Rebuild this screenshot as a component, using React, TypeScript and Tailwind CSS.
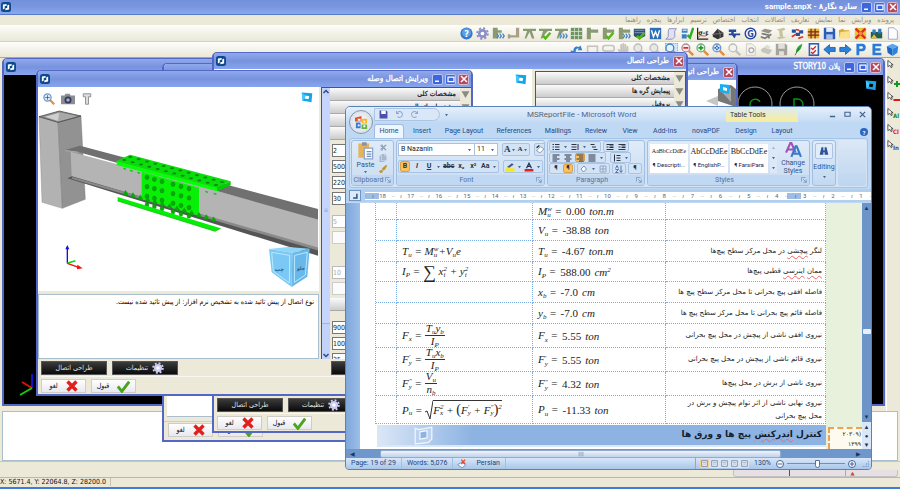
import { type ReactNode } from "react";
import { FaUndo, FaRedo, FaPaintBrush, FaCut, FaCopy, FaHandPaper } from "react-icons/fa";

interface IconProps {
  children: ReactNode;
  className?: string;
}

function Icon({ children, className = "size-[15px]" }: IconProps) {
  return (
    <svg viewBox="0 0 16 16" className={`shrink-0 ${className}`} aria-hidden="true">
      {children}
    </svg>
  );
}

function AppLogo() {
  return (
    <Icon className="size-[10px]">
      <rect width="16" height="16" rx="4" fill="#0d4a8c" />
      <path d="M3 4l6-1v3l-3 .5v4L3 12z" fill="#fff" />
      <path d="M13 12l-6 1v-3l3-.5v-4L13 4z" fill="#fff" />
    </Icon>
  );
}

function ViewLogo() {
  return (
    <Icon className="size-3">
      <path fillRule="evenodd" d="M1 2l14 1-1 12-5-1-7-1z M6 6l-1 4 5 1 1-4z" fill="#14a4ea" />
      <path d="M1 2l5 4-1 4-3 3z" fill="#46c6fa" />
    </Icon>
  );
}

const olive = "#8a9a72";
const chevrons = <path d="M6 8l2 3-2 3M9.500 8l2 3-2 3M13 8l2 3-2 3" stroke="#4383c4" fill="none" strokeWidth="1.600" />;
const check = <path d="M5 11l3 3 6-7" stroke="#52b813" fill="none" strokeWidth="3" />;

function gear(color: string) {
  return (
    <g>
      <circle cx="8" cy="8" r="5.5" fill={color} />
      <circle cx="8" cy="8" r="6.5" fill="none" stroke={color} strokeWidth="2.4" strokeDasharray="2.6 2.5" />
      <circle cx="8" cy="8" r="2.3" fill="#fff" />
    </g>
  );
}

function lens(ring: string, glass: string, mark?: ReactNode) {
  return (
    <g>
      <path d="M9 9l6 6" stroke={ring === "#bbb" ? "#c4c2bb" : "#e88b3c"} strokeWidth="3" />
      <circle cx="6" cy="6" r="4.8" fill={glass} stroke={ring} strokeWidth="1.6" />
      {mark}
    </g>
  );
}

const topIcons: { name: string; art: ReactNode }[] = [
  {
    name: "Help",
    art: (
      <g>
        <circle cx="8" cy="8" r="7.5" fill="#2f79cf" />
        <circle cx="8" cy="7" r="5.5" fill="#5d9fe4" />
        <text x="8" y="12" fontSize="11" fontWeight="700" textAnchor="middle" fill="#fff">?</text>
      </g>
    ),
  },
  { name: "Options", art: gear("#8b8fc9") },
  { name: "Column steps", art: <g><path d="M1 1h6v13H1zM7 4h5v3H7z" fill={olive} />{chevrons}</g> },
  { name: "Base joint", art: <path d="M2 10h9V1h4v12H2zM1 9h3v5H1z" fill="#a9a08a" /> },
  { name: "Brace", art: <path d="M0 2h16v3h-5l3 9h-3L8 6l-4 8H2l3-9H0z" fill={olive} /> },
  { name: "Brace check", art: <g><path d="M0 2h16v3h-5L8 8 4 14H2l3-9H0z" fill={olive} />{check}</g> },
  { name: "Brace steps", art: <g><path d="M0 2h16v3h-5L8 8 4 14H2l3-9H0z" fill={olive} />{chevrons}</g> },
  { name: "Grid", art: <g><path d="M1 1h14v14H1z" fill="#6f9562" /><path d="M1 5.5h14M1 10.500h14M5.500 1v14M10.500 1v14" stroke="#d6e3cd" /></g> },
  { name: "Joint", art: <path d="M1 1h5v2h9v4H6v8H1z" fill={olive} /> },
  { name: "Joint check", art: <g><path d="M1 1h5v2h9v4H6v8H1z" fill={olive} />{check}</g> },
  { name: "Joint steps", art: <g><path d="M1 1h5v2h9v4H6v8H1z" fill={olive} />{chevrons}</g> },
  { name: "Verify", art: <g><path d="M1 2h14v9l-7 4-7-4z" fill="#2f4f6f" /><path d="M2 4h12M2 7h12" stroke="#8fb0cc" />{check}</g> },
  { name: "Word report", art: <g><path d="M1 1h14v14H1z" fill="#2d6fb8" /><path d="M3 4l2.500 8L8 6l2.500 6L13 4" stroke="#fff" fill="none" strokeWidth="1.700" /></g> },
  { name: "Script", art: <path d="M5 2h9l-2 3v7l-3 3H1l3-3V5z" fill="#dfe0f2" stroke="#8183b8" /> },
  { name: "Model check", art: <g><path d="M1 2h7v5H1zM1 9h6v5H1z" fill="#3d7cc0" /><path d="M2 3h5v2H2z" fill="#bcd8f0" /><path d="M8 10l3 3 4-12" stroke="#2fae22" strokeWidth="3" fill="none" /></g> },
  { name: "Stress", art: <g><path d="M2 1v14h13" stroke="#222" strokeWidth="1.500" fill="none" /><text x="9" y="10" fontSize="8" fontWeight="700" textAnchor="middle" fill="#222">σ-ε</text><path d="M3 13c2-5 6 0 11-3" stroke="#c22" fill="none" /></g> },
  { name: "Load", art: <g><path d="M1 9l6-7 7 5v5l-7 3-6-3z" fill="#333" /><path d="M7 2l3 6 4-1M1 9l9-1v5" stroke="#888" fill="none" /></g> },
  { name: "Section", art: <path d="M1 3h9v3H7v2h8v2h-5l-2 4-3-4H1V8h3V6H1z" fill="#23489c" /> },
  { name: "Group", art: <g><circle cx="8" cy="8" r="6.500" fill="#fff" stroke="#23489c" strokeWidth="1.800" /><text x="8" y="12" fontSize="11" fontWeight="700" textAnchor="middle" fill="#23489c">G</text></g> },
  { name: "Plate", art: <g><path d="M1 5l5-3 9 2-4 4z" fill="#989488" /><path d="M2 8l9 2v4M1 12l5 2 8-5" stroke="#777" strokeWidth="2" fill="none" /></g> },
  { name: "Profile", art: <path d="M2 3l9-2 2 2-4 2 1 7 4 1-9 2-3-2 4-1-1-7z" fill="#c6c4a4" /> },
  { name: "Bolts", art: <g><path d="M1 3h5v4H1zM6 7h5v4H6zM10 4h5v4h-5z" fill="#2350a0" /><path d="M1 12l5-3M9 14l6-2M6 3l4 1" stroke="#d33" strokeWidth="2" /></g> },
  { name: "Frame", art: <g><path d="M1 2h14v12H1z" fill="#e6b53a" /><path d="M1 6h14M1 10h14M5 2v12M10 2v12" stroke="#7c261c" strokeWidth="1.500" /></g> },
  { name: "Save", art: <g><path d="M1 1h12l2 2v12H1z" fill="#2c5db4" /><path d="M4 1h8v5H4z" fill="#e9f0fa" /><path d="M4 9h8v6H4z" fill="#a9c1e6" /></g> },
  { name: "Open", art: <g><path d="M1 4l5-2 2 2h6v9H2z" fill="#d9a933" /><path d="M3 6l12-1-2 9H2z" fill="#fde08a" /></g> },
  { name: "Delete grid", art: <g><path d="M1 1h14v14H1z" fill="#e8c52f" /><path d="M2 2l12 12M14 2L2 14" stroke="#d5341e" strokeWidth="3" /><path d="M6 6h4v4H6z" fill="#f08438" /></g> },
  { name: "Landscape", art: <g><path d="M1 6h14v8H1z" fill="#2c5c49" /><path d="M3 3h4v5H3zM10 2h4v6h-4z" fill="#2b7fc4" /><path d="M1 14l4-5 4 5z" fill="#d9c338" /></g> },
  { name: "New", art: <path d="M3 1h7l4 4v10H3z" fill="#fdfdff" stroke="#8f9cc0" /> },
];

const gray = "#c6c4bc";

const bottomIcons: { name: string; art: ReactNode }[] = [
  { name: "Refresh", art: <path d="M1 15V9l3 1c0-5 4-7 7-5l2-2 2 6H9l2-2C8 6 7 8 7 11l3 1z" fill="#2c83d0" /> },
  { name: "Box", art: <rect x="2" y="4" width="12" height="9" fill="none" stroke={gray} strokeWidth="2" /> },
  { name: "Lasso", art: <g><rect x="1" y="3" width="14" height="7" rx="3" fill="none" stroke={gray} strokeWidth="2" /><path d="M6 10l2 4" stroke={gray} strokeWidth="2" /></g> },
  { name: "Pan", art: <FaHandPaper size={15} color={gray} /> },
  { name: "Zoom previous", art: lens("#bbb", "#e8e7e2") },
  { name: "Zoom next", art: lens("#bbb", "#e8e7e2") },
  { name: "Zoom window", art: <g><rect x="0" y="0" width="16" height="16" fill="#d3e6f8" stroke="#3f7fc2" strokeDasharray="2 1" />{lens("#4583be", "#e2f3fd")}</g> },
  { name: "Zoom out", art: lens("#b08c98", "#fbeaea", <path d="M3 6h6" stroke="#c22" strokeWidth="2" />) },
  { name: "Zoom in", art: lens("#7ba68a", "#e4fbe4", <path d="M3 6h6M6 3v6" stroke="#1f9a1f" strokeWidth="2" />) },
  { name: "Zoom all", art: lens("#6d94c4", "#def", <path d="M3 6h6M6 3v6" stroke="#2757b0" strokeWidth="2" strokeDasharray="2" />) },
  { name: "Find", art: lens("#bbb", "#f3f2ee") },
  { name: "Preview", art: <g><path d="M3 1h7l4 4v10H3z" fill="#f4f3ee" stroke={gray} /><circle cx="9" cy="9" r="3" fill="none" stroke="#aaa" strokeWidth="1.500" /></g> },
  { name: "Print", art: <g><path d="M1 8l5-3 9 4-4 5-9-3z" fill={gray} /><path d="M5 5l4-3 4 3-3 3z" fill="#ddd" /></g> },
  { name: "Save copy", art: <g><path d="M1 1h12l2 2v12H1z" fill="#a5a39c" /><path d="M4 1h8v6H4zM5 10h6v5H5z" fill="#e2e0d8" /></g> },
  { name: "Pin", art: <g><path d="M6 12c0-5 3-9 8-11-1 5-3 9-8 11z" fill="#2ba63c" /><path d="M5 15l5-9" stroke="#1d6a33" /></g> },
  { name: "Checklist", art: <g><rect x="3" y="1" width="11" height="14" fill="#fff" stroke="#2d61ae" strokeWidth="2" /><path d="M5 6l2 2 4-4M5 11l2 2 4-4" stroke="#d22" strokeWidth="1.600" fill="none" /></g> },
  { name: "Back", art: <path d="M1 8l7-6v3.500h7v5H8V14z" fill="#2d80d8" stroke="#1b5db0" /> },
  { name: "Forward", art: <path d="M15 8L8 2v3.500H1v5h7V14z" fill="#2d80d8" stroke="#1b5db0" /> },
  { name: "Plan", art: <path d="M3 1h7a4.500 4.500 0 010 9H6.500v5H3zM6.500 4v3H9.500a1.500 1.500 0 000-3z" fill="#2b7cd6" /> },
  { name: "Elevation", art: <path d="M3 1h11v3H6.500v2.500H13v3H6.500V12H14v3H3z" fill="#2b7cd6" /> },
  { name: "3D", art: <g><path d="M1 4l7-3 7 3-7 3z" fill="#56a5ee" /><path d="M1 4l7 3v9l-6-4z" fill="#1b66c6" /><path d="M15 4L8 7v9l6-4z" fill="#2b83dd" /></g> },
];

const menuItems = ["پرونده", "ویرایش", "نما", "نمایش", "تعاریف", "اتصالات", "انتخاب", "اختصاص", "ترسیم", "ابزارها", "پنجره", "راهنما"];

function IconBar({ icons, className }: { icons: typeof topIcons; className: string }) {
  return (
    <div className={`flex items-center justify-between ${className}`}>
      {icons.map((icon) => (
        <button key={icon.name} type="button" aria-label={icon.name}>
          <Icon className="size-[13px]">{icon.art}</Icon>
        </button>
      ))}
    </div>
  );
}

function WindowButtons({ closeOnly = false }: { closeOnly?: boolean }) {
  const box = "flex size-[11px] items-center justify-center rounded-[2px] border border-[#b9c6f4] bg-[#3d66dc]";
  return (
    <div className="flex gap-[2px]">
      {!closeOnly && (
        <>
          <button type="button" aria-label="Minimize" className={box}>
            <Icon className="size-2"><path d="M2 11h8v3H2z" fill="#fff" /></Icon>
          </button>
          <button type="button" aria-label="Maximize" className={box}>
            <Icon className="size-2"><path d="M2 4h12v9H2z" fill="none" stroke="#fff" strokeWidth="2.500" /></Icon>
          </button>
        </>
      )}
      <button type="button" aria-label="Close" className="flex size-[11px] items-center justify-center rounded-[2px] border border-[#dcb9c8] bg-[#b5485e]">
        <Icon className="size-2"><path d="M2 2l12 12M14 2L2 14" stroke="#fff" strokeWidth="3" /></Icon>
      </button>
    </div>
  );
}

interface XpWindowProps {
  title: ReactNode;
  className: string;
  closeOnly?: boolean;
  logo?: boolean;
  children: ReactNode;
}

function XpWindow({ title, className, closeOnly, logo = true, children }: XpWindowProps) {
  return (
    <section className={`absolute flex flex-col overflow-hidden rounded-t-[5px] border-2 border-t border-[#5467c4] bg-[#ece9d8] ${className}`}>
      <header className="flex h-4 shrink-0 items-center gap-1 bg-linear-to-b from-[#8fa9ec] via-[#7893de] to-[#86a5ee] px-[2px] text-white">
        {logo && <AppLogo />}
        <h2 dir="rtl" className="ml-auto text-[8px] leading-3 whitespace-nowrap [-webkit-text-stroke:0.3px_white]">{title}</h2>
        <WindowButtons closeOnly={closeOnly} />
      </header>
      {children}
    </section>
  );
}

function AccordionHeader({ label }: { label: string }) {
  return (
    <div className="flex h-[13px] shrink-0">
      <button type="button" dir="rtl" className="flex-1 border-b border-[#a9a9a9] bg-linear-to-b from-[#fbfbfb] to-[#cccccc] px-1 text-right text-[7px] leading-3 text-[#111] [-webkit-text-stroke:0.2px_#111]">
        {label}
      </button>
      <div className="flex w-[11px] items-center justify-center bg-[#ece9d8]">
        <Icon className="size-[9px]"><path d="M1 2h14L8 14z" fill="#8b8a85" /></Icon>
      </div>
    </div>
  );
}

const darkButton = "flex h-[14px] w-[66px] shrink-0 items-center justify-center gap-1 border border-[#555] bg-linear-to-b from-[#3c3c3c] to-[#0b0b0b] text-[7px] text-[#e4e4e4]";
const lightButton = "flex h-[14px] w-[45px] shrink-0 items-center justify-center gap-2 border border-[#cfcdc6] bg-linear-to-b from-white to-[#e9e8ef] text-[7px] text-[#111]";

function OkCancel() {
  return (
    <div className="flex gap-[5px]">
      <button type="button" className={lightButton}>
        لغو
        <Icon className="size-3"><path d="M2 2l12 12M14 2L2 14" stroke="#e0201b" strokeWidth="4.500" /></Icon>
      </button>
      <button type="button" className={lightButton}>
        قبول
        <Icon className="size-[13px]"><path d="M1 8l5 6L15 2" stroke="#4aa51c" strokeWidth="3.500" fill="none" /></Icon>
      </button>
    </div>
  );
}

function DialogFooter({ extra }: { extra?: string }) {
  return (
    <footer className="flex shrink-0 flex-col gap-[2px] px-[3px] pt-[2px] pb-[1px]">
      <div className="flex gap-[5px] border-b border-[#f8f7f1] pb-[1px]">
        <button type="button" className={darkButton}>طراحی اتصال</button>
        <button type="button" className={darkButton}>
          تنظیمات
          <Icon className="size-3">{gear("#c9cbf0")}</Icon>
        </button>
        {extra && <button type="button" className={`ml-[148px] ${darkButton}`}>{extra}</button>}
      </div>
      <OkCancel />
    </footer>
  );
}

// Bolt rows on the splice plates, generated along the beam slope
const flangeBolts = Array.from({ length: 12 }, (_, i) => i);
const nutRow = Array.from({ length: 13 }, (_, i) => i);
const webBolts = [0, 22, 45, 78, 102, 126];

function BeamView() {
  return (
    <svg viewBox="114 81 840 612" className="h-[204px] w-[280px]" role="img" aria-label="Beam splice model">
      <path d="M117 170l57 17 13 258-61-18z" fill="#b2b2b2" stroke="#777" />
      <path d="M174 187l69-19 13 250-69 27z" fill="#929292" stroke="#666" />
      <path d="M117 170l61-17 65 15-69 19z" fill="#8f8f8f" stroke="#333" strokeWidth="2" />
      <path d="M134 170l44-12 50 11-54 14z" fill="#cfcfcf" />
      <path d="M178 158l50 11-54 14z" fill="#a8a8a8" />
      <path d="M212 275l743 200v100L215 350z" fill="#b4b4b4" />
      <path d="M195 270l45-13 715 190v32L235 276z" fill="#707070" />
      <path d="M202 355l14-6 740 219v20z" fill="#555" />
      <path d="M218 351l738 212v9L214 356z" fill="#8a8a8a" />
      <path d="M195 270l40 5v3l-40-5z" fill="#aaa" />
      <path d="M425 335l172 48v84l-172-50z" fill="#08f008" />
      {webBolts.map((dx) =>
        [0, 28, 57, 82].map((dy) => (
          <ellipse key={`${dx}-${dy}`} cx={441 + dx} cy={352 + dy + dx * 0.27} rx="6" ry="7" fill="#0aa80a" stroke="#067806" />
        )),
      )}
      <path d="M353 411l309 94-17 9-292-91z" fill="#05ee05" />
      <path d="M353 423l292 91 17-9" stroke="#04b004" strokeWidth="2" fill="none" />
      {nutRow.map((i) => (
        <path key={i} d={`M${369 + i * 22} ${402 + i * 6.600}l8-12 8 14q-8 4-16-2z`} fill="#07a807" />
      ))}
      <path d="M350 303l40-19 302 80-40 19z" fill="#0bdc0b" />
      <path d="M350 303l302 80v11L350 315z" fill="#05ff05" />
      <path d="M652 383l40-19v12l-40 18z" fill="#08c808" />
      {flangeBolts.map((i) => (
        <g key={i} fill="#078a07">
          <ellipse cx={373 + i * 25} cy={300 + i * 6.800} rx="6" ry="3" />
          <ellipse cx={391 + i * 25} cy={291 + i * 6.800} rx="6" ry="3" />
        </g>
      ))}
      <path d="M370 325l8 3M390 331l8 3M412 337l8 3M616 394l8 3M641 400l8 3" stroke="#0c0" strokeWidth="4" />
      <path d="M202 610v-48" stroke="#1212d8" strokeWidth="4" />
      <path d="M196 568l6-13 6 13z" fill="#1212d8" />
      <path d="M202 610l24-8" stroke="#12d612" strokeWidth="5" />
      <path d="M202 610l34 12" stroke="#e11" strokeWidth="4" />
      <path d="M232 614l16 11-17 3z" fill="#e11" />
      <path d="M807 567l58-6 64 5-52 12z" fill="#8fd6f8" />
      <path d="M807 567l70 11-2 103-60-44z" fill="#7cc8f4" />
      <path d="M877 578l52-12-7 84-47 31z" fill="#68b8ea" />
      <path d="M815 577l54 9-1 83-48-35zM884 586l38-9-6 68-33 22z" fill="none" stroke="#b9e8ff" strokeWidth="3" />
      <text x="838" y="632" fontSize="17" fontWeight="700" textAnchor="middle" fill="#23648c">چپ</text>
      <text x="903" y="630" fontSize="15" fontWeight="700" textAnchor="middle" fill="#23648c">جلو</text>
    </svg>
  );
}

function Field({ value, disabled = false, label }: { value: string; disabled?: boolean; label: string }) {
  return (
    <input
      aria-label={label}
      defaultValue={value}
      disabled={disabled}
      className="h-[13px] w-24 shrink-0 border border-[#777] bg-white text-[7px] text-[#222] disabled:border-[#bbb] disabled:text-[#aaa]"
    />
  );
}

function SpliceDialog() {
  return (
    <XpWindow title="ویرایش اتصال وصله" className="top-[70px] left-9 h-[326px] w-[437px]">
      <div className="flex min-h-0 flex-1">
        <div className="flex w-[281px] flex-col">
          <div className="relative bg-white">
            <BeamView />
            <div className="absolute top-[5px] left-[5px] flex items-center gap-[6px]">
              <button type="button" aria-label="Zoom"><Icon className="size-3">{lens("#6d94c4", "#def", <path d="M3 6h6M6 3v6" stroke="#2757b0" />)}</Icon></button>
              <button type="button" aria-label="Snapshot">
                <Icon className="size-[14px]"><path d="M0 4h4l1-2h5l1 2h5v10H0z" fill="#8c8c96" /><circle cx="8" cy="9" r="4" fill="#333a55" /><circle cx="8" cy="9" r="2" fill="#9fb0d8" /></Icon>
              </button>
              <button type="button" aria-label="Bolt">
                <Icon className="size-3"><path d="M3 1h10v4h-3v10H6V5H3z" fill="#ddd" stroke="#777" /></Icon>
              </button>
            </div>
            <div className="absolute top-1 right-[6px]"><ViewLogo /></div>
          </div>
          <p dir="rtl" className="mt-[3px] flex-1 border border-[#a9bfcd] bg-white px-1 py-[2px] text-[7px] leading-[11px] whitespace-nowrap text-[#000]">
            نوع اتصال از پیش تائید شده به تشخیص نرم افزار: از پیش تائید شده نیست.
          </p>
        </div>
        <div className="ml-[2px] flex flex-1 overflow-hidden border-t border-l border-[#555]">
          <div className="flex w-2 flex-col justify-between bg-[#c1d2fb]">
            <Icon className="size-2"><path d="M3 10l5-5 5 5" stroke="#334a86" strokeWidth="3" fill="none" /></Icon>
            <div className="mb-auto flex h-[228px] items-center justify-center border-b border-[#9db3ea] bg-[#c6d5fd] text-[6px] text-[#8aa2dc]">≡</div>
            <Icon className="size-2"><path d="M3 6l5 5 5-5" stroke="#334a86" strokeWidth="3" fill="none" /></Icon>
          </div>
          <div className="flex flex-1 flex-col">
            <AccordionHeader label="مشخصات کلی" />
            <AccordionHeader label="مشخصات اتصال" />
            <AccordionHeader label="ورق بال" />
            <AccordionHeader label="ورق جان" />
            <div className="flex flex-col gap-[3px] pt-1 pl-[2px]">
              <Field label="Count" value="2" />
              <Field label="Length" value="500" />
              <Field label="Width" value="220" />
              <Field label="Thickness" value="30" />
            </div>
            <div className="flex flex-col gap-[3px] pt-[10px] pl-[2px]">
              <Field label="Weld" value="5" disabled />
              <button type="button" className="h-[13px] w-24 border border-[#ccc] bg-[#fbfbfb] text-[8px]">...</button>
            </div>
            <div className="flex flex-col gap-[3px] pt-[22px] pb-[3px] pl-[2px]">
              <Field label="Gap" value="10" disabled />
              <button type="button" className="h-[13px] w-24 border border-[#ccc] bg-[#fbfbfb] text-[8px]">...</button>
            </div>
            <AccordionHeader label="ورق جان" />
            <div className="flex flex-col gap-[3px] pt-[10px] pl-[2px]">
              <Field label="Plate height" value="900" />
              <Field label="Plate width" value="100" />
              <Field label="Edge" value="35" />
            </div>
          </div>
        </div>
      </div>
      <DialogFooter extra="نمایش گزارش" />
    </XpWindow>
  );
}

function ConnectionDialog() {
  return (
    <XpWindow closeOnly title="طراحی اتصال" className="top-[52px] left-[212px] h-[381px] w-[476px]">
      <div className="flex min-h-0 flex-1">
        <div className="flex flex-1 justify-end bg-white pt-1 pr-[5px]"><ViewLogo /></div>
        <div className="mt-[2px] ml-[3px] flex w-[151px] flex-col overflow-hidden border border-[#555]">
          <AccordionHeader label="مشخصات کلی" />
          <AccordionHeader label="پیمایش گره ها" />
          <AccordionHeader label="پروفیل" />
        </div>
      </div>
      <DialogFooter />
    </XpWindow>
  );
}

function AutoDesignDialog() {
  return (
    <XpWindow closeOnly logo={false} title="طراحی اتوماتیک" className="top-[63px] left-[162px] h-[379px] w-[576px]">
      <div className="ml-[3px] flex min-h-0 flex-1 items-start justify-end border-b border-[#a9bfcd] bg-white">
        <svg viewBox="0 0 30 30" className="size-[30px]" aria-hidden="true">
          <path d="M12 9l13-4 5 4v18l-18-6z" fill="#777" />
          <path d="M15 11l10-3v14z" fill="#aaa" />
          <path d="M0 21l12-5v10z" fill="#c5c5c5" />
          <path d="M14 4l10 1-1 9-9-2z" fill="#19aef0" />
          <path d="M17 7l4 1v3l-4-1z" fill="#fff" />
        </svg>
      </div>
      <footer className="mt-1 flex h-[19px] shrink-0 border-t border-[#cfcdc0] px-1 pt-[1px]">
        <OkCancel />
      </footer>
    </XpWindow>
  );
}

function PlanWindow() {
  return (
    <XpWindow title="پلان STORY10" className="top-[58px] left-[2px] h-[348px] w-[883px]">
      <div className="flex flex-1 flex-col justify-between bg-black">
        <div className="flex justify-end gap-12 pt-1 pr-[6px]">
          <svg viewBox="0 0 80 40" className="h-10 w-20" aria-hidden="true">
            <g fill="none" stroke="#9a9a9a">
              <circle cx="18" cy="25" r="17" />
              <circle cx="60" cy="25" r="17" />
            </g>
            <g stroke="#0d970d" strokeWidth="1.400" fill="none">
              <path d="M23 23c-2-4-10-4-10 3s8 7 10 3M57 20v11h3c8 0 8-11 0-11z" />
            </g>
          </svg>
          <ViewLogo />
        </div>
        <svg viewBox="0 0 30 40" className="mb-2 h-10 w-[30px]" aria-hidden="true">
          <path d="M28 32V18" stroke="#1010d0" strokeWidth="2" />
          <path d="M28 32l-10-6" stroke="#d11" strokeWidth="2" />
          <path d="M28 32l-12 7" stroke="#1c1" strokeWidth="2" />
        </svg>
      </div>
    </XpWindow>
  );
}

/* ---- Word window ---- */

function Tool({ name, children, active = false }: { name: string; children: ReactNode; active?: boolean }) {
  return (
    <button
      type="button"
      aria-label={name}
      className={`flex h-full min-w-[10px] items-center justify-center rounded-[2px] text-[7px] leading-none text-[#2a3344] ${active ? "border border-[#d6a04c] bg-[#fdc25d]" : ""}`}
    >
      {children}
    </button>
  );
}

function ToolStrip({ children, compact = false }: { children: ReactNode; compact?: boolean }) {
  return (
    <div className={`flex items-center gap-[2px] rounded-[2px] border border-[#a9c3e4] bg-[#d3e3f6] px-px ${compact ? "h-[11px]" : "h-[13px]"}`}>
      {children}
    </div>
  );
}

function lines(rows: string) {
  return <Icon className="size-2"><path d={rows} stroke="#2c3444" strokeWidth="2" /></Icon>;
}

const caret = <Icon className="h-1 w-[5px]"><path d="M2 4h12L8 13z" fill="#4b6a94" /></Icon>;

function RibbonGroup({ label, className, children }: { label: string; className: string; children: ReactNode }) {
  return (
    <div className={`flex shrink-0 flex-col overflow-hidden rounded-[3px] border border-[#9fbfe3] bg-linear-to-b from-[#dfebf8] to-[#c9dcf2] ${className}`}>
      <div className="flex h-[34px] shrink-0">{children}</div>
      <div className="flex flex-1 items-center bg-[#c0d8f1] text-[7px] leading-none text-[#5273a5]">
        <span className="flex-1 text-center">{label}</span>
        <Icon className="mr-[2px] size-[6px]"><path d="M1 12V1h11M6 6l8 8M14 7v7H7" fill="none" stroke="#6c8cb8" strokeWidth="2" /></Icon>
      </div>
    </div>
  );
}

const styleCards = [
  { sample: "AaBbCcDdEe", name: "¶ Descripti...", size: "text-[6px]" },
  { sample: "AbCcDdEe", name: "¶ EnglishP...", size: "text-[8px]" },
  { sample: "BbCcDdEe", name: "¶ FarsiPara", size: "text-[8px]" },
];

const wordTabs = [
  { name: "Insert", width: "w-9" },
  { name: "Page Layout", width: "w-12" },
  { name: "References", width: "w-13" },
  { name: "Mailings", width: "w-9" },
  { name: "Review", width: "w-10" },
  { name: "View", width: "w-7" },
  { name: "Add-Ins", width: "w-[42px]" },
  { name: "novaPDF", width: "w-10" },
  { name: "Design", width: "w-10" },
  { name: "Layout", width: "w-8" },
];

function Ribbon() {
  return (
    <div className="mx-[3px] flex h-[50px] shrink-0 gap-[2px] rounded-[3px] border border-[#a5c3e6] bg-[#d3e3f5] p-px">
      <RibbonGroup label="Clipboard" className="w-[43px]">
        <button type="button" className="flex w-[27px] flex-col items-center gap-px text-[7px] leading-[8px] text-[#31538c]">
          <Icon className="size-[19px]"><path d="M2 2h9v12H2z" fill="#e6b35a" /><path d="M5 1h4v3H5z" fill="#8993a5" /><path d="M7 6h7v9H7z" fill="#fff" stroke="#8aa3c8" /><path d="M9 9h4M9 11h4M9 13h4" stroke="#6e8fc0" /></Icon>
          Paste
          {caret}
        </button>
        <div className="flex flex-col items-center justify-around py-px">
          <button type="button" aria-label="Cut"><FaCut size={7} color="#8c9cb5" /></button>
          <button type="button" aria-label="Copy"><FaCopy size={8} color="#a9b8cf" /></button>
          <button type="button" aria-label="Format painter"><FaPaintBrush size={8} color="#c79628" /></button>
        </div>
      </RibbonGroup>
      <RibbonGroup label="Font" className="w-[149px]">
        <div className="flex w-full flex-col justify-around px-px">
          <div className="flex items-center gap-1">
            <div className="flex">
              <div className="flex h-[13px] items-center border border-[#abc1de] bg-white pr-[2px]">
                <select aria-label="Font name" className="w-[68px] appearance-none pl-[2px] text-[7px] leading-none text-[#222]">
                  <option>B Nazanin</option>
                </select>
                {caret}
              </div>
              <div className="flex h-[13px] items-center border border-l-0 border-[#abc1de] bg-white pr-[2px]">
                <select aria-label="Font size" className="w-[15px] appearance-none pl-[2px] text-[7px] leading-none text-[#222]">
                  <option>11</option>
                </select>
                {caret}
              </div>
            </div>
            <ToolStrip>
              <Tool name="Grow font"><b className="font-[Liberation_Serif] text-[9px]">A</b>{caret}</Tool>
              <Tool name="Shrink font"><b className="font-[Liberation_Serif] text-[7px]">A</b>{caret}</Tool>
            </ToolStrip>
            <ToolStrip><Tool name="Clear formatting"><Icon className="size-[9px]"><path d="M1 10l7-7 6 4-7 7z" fill="#fff" stroke="#4a5a75" /><path d="M1 5l5-4" stroke="#222" strokeWidth="2" /></Icon></Tool></ToolStrip>
          </div>
          <div className="flex justify-between">
            <ToolStrip>
              <Tool name="Bold" active><b>B</b></Tool>
              <Tool name="Italic"><b className="italic">I</b></Tool>
              <Tool name="Underline"><b className="underline">U</b></Tool>
              {caret}
              <Tool name="Strikethrough"><b className="line-through">abc</b></Tool>
              <Tool name="Subscript"><b>x₂</b></Tool>
              <Tool name="Superscript"><b>x²</b></Tool>
              <Tool name="Change case"><b>Aa</b></Tool>
              {caret}
            </ToolStrip>
            <ToolStrip>
              <Tool name="Highlight"><Icon className="size-[10px]"><path d="M1 10h14v5H1z" fill="#f7e81a" /><path d="M3 8l8-6 3 2-7 5z" fill="#4a5a75" /></Icon></Tool>
              {caret}
              <Tool name="Font color"><Icon className="size-[10px]"><path d="M1 11h14v4H1z" fill="#e02020" /><path d="M4 10l4-8 4 8M5 7h6" stroke="#23355e" strokeWidth="2" fill="none" /></Icon></Tool>
              {caret}
            </ToolStrip>
          </div>
        </div>
      </RibbonGroup>
      <RibbonGroup label="Paragraph" className="w-[98px]">
        <div className="flex w-full flex-col px-px">
          <div className="flex gap-[2px]">
            <ToolStrip compact>
              <Tool name="Bullets">{lines("M1 3h3M6 3h9M1 8h3M6 8h9M1 13h3M6 13h9")}</Tool>
              {caret}
              <Tool name="Numbering">{lines("M1 3h10M14 2v12M1 8h10M1 13h10")}</Tool>
              {caret}
              <Tool name="Multilevel">{lines("M1 3h8M4 8h8M7 13h8")}</Tool>
            </ToolStrip>
            <ToolStrip compact>
              <Tool name="Outdent">{lines("M1 3h14M7 6h8M7 9h8M1 13h14M1 8h4")}</Tool>
              <Tool name="Indent">{lines("M1 3h14M7 6h8M7 9h8M1 13h14M1 8h4")}</Tool>
            </ToolStrip>
          </div>
          <div className="flex gap-1">
            <ToolStrip compact>
              <Tool name="Align left">{lines("M1 2h14M1 6h9M1 10h14M1 14h9")}</Tool>
              <Tool name="Center">{lines("M1 2h14M4 6h8M1 10h14M4 14h8")}</Tool>
              <Tool name="Align right" active>{lines("M1 2h14M6 6h9M1 10h14M6 14h9")}</Tool>
              <Tool name="Justify">{lines("M1 2h14M1 6h14M1 10h14M1 14h14")}</Tool>
              {caret}
            </ToolStrip>
            <ToolStrip compact><Tool name="Line spacing">{lines("M3 1v14M7 3h8M7 8h8M7 13h8")}</Tool>{caret}</ToolStrip>
          </div>
          <div className="flex gap-[2px]">
            <ToolStrip compact><Tool name="Left to right">¶</Tool><Tool name="Right to left" active>¶</Tool></ToolStrip>
            <ToolStrip compact>
              <Tool name="Shading"><Icon className="size-2"><path d="M2 8l6-6 5 6-6 6z" fill="#fff" stroke="#54709c" strokeWidth="1.500" /></Icon></Tool>
              {caret}
              <Tool name="Borders"><Icon className="size-2"><path d="M2 2h12v12H2zM8 2v12M2 8h12" fill="none" stroke="#8298ba" strokeWidth="1.500" /></Icon></Tool>
            </ToolStrip>
            <ToolStrip compact><Tool name="Sort"><Icon className="size-2"><path d="M1 7l3-6 3 6M1 9h6l-6 6h6M12 1v13M9 11l3 4 3-4" fill="none" stroke="#2b5398" strokeWidth="1.500" /></Icon></Tool></ToolStrip>
            <ToolStrip compact><Tool name="Show marks">¶</Tool></ToolStrip>
          </div>
        </div>
      </RibbonGroup>
      <RibbonGroup label="Styles" className="w-[163px]">
        <div className="flex items-center gap-[2px] pl-[2px]">
          {styleCards.map((card) => (
            <button key={card.name} type="button" className="flex h-[29px] w-[38px] flex-col justify-center gap-1 bg-white text-center whitespace-nowrap text-[#222]">
              <span className={`font-[Liberation_Serif] leading-[9px] ${card.size}`}>{card.sample}</span>
              <span className="text-[6px] leading-[9px] text-[#26234f]">{card.name}</span>
            </button>
          ))}
          <div className="flex h-[30px] w-[7px] flex-col items-center justify-around bg-[#dbe8f7]">
            <Icon className="h-1 w-[5px]"><path d="M2 12h12L8 3z" fill="#9fb1cb" /></Icon>
            {caret}
            {caret}
          </div>
          <button type="button" className="flex w-7 flex-col items-center text-[7px] leading-[8px] text-[#31538c]">
            <Icon className="size-[17px]">
              <path d="M1 10L5 1h1l4 9M3 7h5" stroke="#a550b8" strokeWidth="2" fill="none" />
              <path d="M6 14l4-10h1l4 10M8 11h6" stroke="#3a7bc9" strokeWidth="2" fill="none" />
            </Icon>
            Change Styles
          </button>
        </div>
      </RibbonGroup>
      <button type="button" className="flex w-6 shrink-0 flex-col items-center gap-1 rounded-[3px] border border-[#9fbfe3] bg-linear-to-b from-[#dfebf8] to-[#c3d9f1] pt-[2px] text-[7px] leading-[8px] text-[#31538c]">
        <span className="flex h-4 w-[18px] items-center justify-center rounded-[2px] border border-[#a9c3e4] bg-[#e2edf9]">
          <Icon className="size-[10px]"><path d="M1 14l3-12h3v5h2V2h3l3 12H9v-4H7v4z" fill="#2b5398" /></Icon>
        </span>
        Editing
        {caret}
      </button>
      <div className="flex-1 rounded-[3px] bg-linear-to-b from-[#dce8f6] to-[#bdd5ef]" />
    </div>
  );
}

function Scripts({ up, down }: { up?: ReactNode; down: ReactNode }) {
  return (
    <span className="inline-flex flex-col align-middle text-[7px] leading-[6px]">
      <span>{up ?? "\u00a0"}</span>
      <span>{down}</span>
    </span>
  );
}

function Fraction({ top, bottom }: { top: ReactNode; bottom: ReactNode }) {
  return (
    <span className="inline-flex flex-col items-center align-middle leading-[10px]">
      <span className="border-b border-[#333] px-px">{top}</span>
      <span>{bottom}</span>
    </span>
  );
}

function v(base: string, down: string, up?: string) {
  return <>{base}<Scripts up={up} down={down} /></>;
}

const reportRows: { height: string; formula?: ReactNode; symbol: ReactNode; value: string; unit: ReactNode; text?: ReactNode }[] = [
  { height: "h-[17px]", symbol: v("M", "u", "w"), value: "0.00", unit: "ton.m" },
  { height: "h-[21px]", symbol: v("V", "u"), value: "-38.88", unit: "ton" },
  {
    height: "h-[21px]",
    formula: <>{v("T", "u")} = {v("M", "u", "w")}+{v("V", "u")}e</>,
    symbol: v("T", "u"), value: "-4.67", unit: "ton.m",
    text: <>لنگر <u className="decoration-[#e66] decoration-wavy underline-offset-2">پیچشی</u> در محل مرکز سطح پیچ‌ها</>,
  },
  {
    height: "h-[20px]",
    formula: <>{v("I", "P")} = <span className="align-middle text-[18px] leading-[14px] not-italic">∑</span> {v("x", "i", "2")} + {v("y", "i", "2")}</>,
    symbol: v("I", "P"), value: "588.00", unit: <>cm<sup className="text-[7px] leading-none">2</sup></>,
    text: <><u className="decoration-[#e66] decoration-wavy underline-offset-2">ممان</u> <u className="decoration-[#e66] decoration-wavy underline-offset-2">اینرسی</u> قطبی پیچ‌ها</>,
  },
  { height: "h-[21px]", symbol: v("x", "b"), value: "-7.0", unit: "cm", text: "فاصله افقی پیچ بحرانی تا محل مرکز سطح پیچ ها" },
  { height: "h-[21px]", symbol: v("y", "b"), value: "-7.0", unit: "cm", text: "فاصله قائم پیچ بحرانی تا محل مرکز سطح پیچ ها" },
  {
    height: "h-[24px]",
    formula: <>{v("F", "x")} = <Fraction top={<>{v("T", "u")}{v("y", "b")}</>} bottom={v("I", "P")} /></>,
    symbol: v("F", "x"), value: "5.55", unit: "ton", text: "نیروی افقی ناشی از پیچش در محل پیچ بحرانی",
  },
  {
    height: "h-[24px]",
    formula: <>{v("F", "y", "′")} = <Fraction top={<>{v("T", "u")}{v("x", "b")}</>} bottom={v("I", "P")} /></>,
    symbol: v("F", "y", "′"), value: "5.55", unit: "ton", text: "نیروی قائم ناشی از پیچش در محل پیچ بحرانی",
  },
  {
    height: "h-[24px]",
    formula: <>{v("F", "y", "″")} = <Fraction top={v("V", "u")} bottom={v("n", "b")} /></>,
    symbol: v("F", "y", "″"), value: "4.32", unit: "ton", text: "نیروی ناشی از برش در محل پیچ‌ها",
  },
  {
    height: "h-[28px]",
    formula: (
      <span className="flex items-center whitespace-pre">
        {v("P", "u")} = <svg viewBox="0 0 8 20" className="h-5 w-2 shrink-0" aria-hidden="true"><path d="M0 12l2-1 3 8L8 .500" stroke="#333" fill="none" /></svg>
        <span className="flex h-5 items-center border-t border-[#333]">
          {v("F", "x", "2")} + <span className="text-[14px] not-italic">(</span>{v("F", "y", "′")} + {v("F", "y", "″")}<span className="text-[14px] not-italic">)</span>
          <sup className="text-[7px]">2</sup>
        </span>
      </span>
    ),
    symbol: v("P", "u"), value: "-11.33", unit: "ton", text: "نیروی نهایی ناشی از اثر توام پیچش و برش در محل پیچ بحرانی",
  },
];

function ReportTable() {
  const cell = "border-r border-b border-dotted border-[#7eaee6] p-0";
  return (
    <table className="ml-[15px] w-[451px] table-fixed border-separate border-spacing-0 border-l border-dotted border-[#7eaee6] font-[Liberation_Serif,DejaVu_Sans,serif] text-[11px] leading-[14px] text-[#222]">
      <colgroup>
        <col className="w-[21px]" />
        <col className="w-[136px]" />
        <col className="w-[133px]" />
        <col />
      </colgroup>
      <tbody>
        {reportRows.map((row, i) => (
          <tr key={i} className={row.height}>
            <td className={cell} />
            <td className={`${cell} whitespace-nowrap italic`}>
              <div className="flex h-4 items-center pl-[5px]"><span>{row.formula}</span></div>
            </td>
            <td className={`${cell} pl-[5px]! whitespace-nowrap italic`}>
              <div className="flex h-[14px] items-center gap-1">
                <span>{row.symbol} =</span>
                <span className="not-italic">{row.value}</span>
                <span>{row.unit}</span>
              </div>
            </td>
            <td dir="rtl" className={`${cell} pr-1! pl-2! font-[DejaVu_Sans] text-[7px] leading-[13px]`}>{row.text}</td>
          </tr>
        ))}
      </tbody>
    </table>
  );
}

function WordDocument() {
  return (
    <div className="flex h-[246px] shrink-0 overflow-hidden bg-[#9dbde6]">
      <div className="w-[14px] shrink-0 bg-linear-to-r from-[#7fa8db] to-[#9dbee8]" />
      <div className="w-[466px] shrink-0 bg-white">
        <ReportTable />
        <div className="mt-px ml-[17px] flex h-[22px] items-center justify-between border-b-2 border-[#d9e7f7] bg-[#8db3e2]">
          <div className="flex h-full w-24 items-center justify-end bg-linear-to-r from-[#dbe7f6] to-[#8db3e2] pr-10">
            <Icon className="size-[19px]"><path d="M1 2l3 1 11-2v10l-3 3-11 1z" fill="#bcd2ee" stroke="#f3f8ff" /><path d="M5 5l6-1v6l-6 1z" fill="#8db3e2" stroke="#f3f8ff" /></Icon>
          </div>
          <h3 dir="rtl" className="pr-1 font-[DejaVu_Sans] text-[9px] font-bold whitespace-nowrap text-[#16202e]">
            کنترل <u className="decoration-[#e66] decoration-wavy">اندرکنش</u> پیچ ها و ورق ها
          </h3>
        </div>
      </div>
      <div className="flex flex-1 items-end bg-[#e7f1dc] pl-[2px]">
        <div className="h-[22px] w-full border-t-2 border-l-2 border-dashed border-[#f0a050] bg-[#fdfbf0] pr-px text-right font-[DejaVu_Sans] text-[6px] leading-[10px] text-[#222]">
          ۲۰۳۰۹)<br />۱۳۹۹
        </div>
      </div>
      <div className="flex w-[9px] shrink-0 flex-col items-center bg-[#6d94c8] text-[6px] leading-[10px] text-[#1e355a]">
        ▲
        <div className="mt-[116px] h-[5px] w-[8px] rounded-[1px] bg-[#e6effa]" />
        <div className="mt-auto">▼</div>
        <div className="flex w-full flex-col items-center bg-[#dbe7f6] leading-[9px]"><span>▲</span><span>●</span><span>▼</span></div>
      </div>
    </div>
  );
}

const rulerMarks = Array.from({ length: 18 }, (_, i) => 18 - i);

function WordWindow() {
  return (
    <section className="absolute top-[106px] left-[345px] flex h-[364px] w-[527px] flex-col overflow-hidden rounded-t-[5px] rounded-b-[4px] border border-[#5b82b8] bg-[#bfd8f3] font-[Roboto,sans-serif]">
      <header className="flex h-[15px] shrink-0 items-center bg-linear-to-b from-[#e4effb] to-[#c5dbf4] text-[8px]">
        <div className="ml-7 flex h-[13px] w-[66px] items-center gap-2 rounded-r-full border border-[#a9c4e4] bg-[#d9e7f7] pl-1">
          <button type="button" aria-label="Save"><Icon className="size-[9px]"><path d="M1 1h12l2 2v12H1z" fill="#4a50ae" /><path d="M4 1h8v6H4z" fill="#fff" /></Icon></button>
          <button type="button" aria-label="Undo"><FaUndo size={7} color="#8fa9cf" /></button>
          <button type="button" aria-label="Redo"><FaRedo size={7} color="#8fa9cf" /></button>
        </div>
        <span className="pl-1">{caret}</span>
        <h1 className="ml-[78px] w-[110px] whitespace-nowrap text-[#3e6aaa]"><span className="text-[#5b6573]">MSReportFile</span> - Microsoft Word</h1>
        <div className="ml-[89px] h-full w-[72px] bg-linear-to-b from-[#dceaf3] to-[#f8ee95] pl-1 text-[7px] leading-[16px] text-[#333]">Table Tools</div>
        <div className="ml-auto flex gap-2 pr-[5px] text-[#44628e]">
          <button type="button" aria-label="Minimize"><Icon className="size-[7px]"><path d="M2 11h12v3H2z" fill="#44628e" /></Icon></button>
          <button type="button" aria-label="Restore"><Icon className="size-[7px]"><path d="M2 3h12v9H2z" fill="none" stroke="#44628e" strokeWidth="2.500" /></Icon></button>
          <button type="button" aria-label="Close"><Icon className="size-[7px]"><path d="M2 2l12 12M14 2L2 14" stroke="#44628e" strokeWidth="3" /></Icon></button>
        </div>
      </header>
      <nav className="flex h-4 shrink-0 items-end pl-[28px] text-[7px] leading-[13px] whitespace-nowrap text-[#254a88]">
        <button type="button" className="w-[30px] rounded-t-[3px] border border-b-0 border-[#9fbce0] bg-[#eef5fc]">Home</button>
        {wordTabs.map((tab) => (
          <button key={tab.name} type="button" className={`${tab.width} text-center`}>{tab.name}</button>
        ))}
        <button type="button" aria-label="Word help" className="mr-[3px] mb-[2px] ml-auto flex size-2 items-center justify-center rounded-full bg-[#2b66c0] text-[6px] font-bold text-white">?</button>
      </nav>
      <button type="button" aria-label="Office" className="absolute top-[3px] left-[3px] flex size-6 items-center justify-center rounded-full border border-[#8896ac] bg-radial from-white to-[#ccd5e2]">
        <Icon className="size-[15px]">
          <path d="M1 3l7-2v6H1z" fill="#e4502a" />
          <path d="M8 4h6v5H8z" fill="#f6b42c" />
          <path d="M2 8h5v6H2z" fill="#3a7bd0" />
          <path d="M8 10h6v5H8z" fill="#6cb33e" />
          <path d="M4 4h3v2H4zM10 6h2v2h-2zM4 10h2v2H4zM10 11h2v2h-2z" fill="#fff" />
        </Icon>
      </button>
      <Ribbon />
      <div className="my-px flex h-[13px] shrink-0 items-center bg-[#b3cfee] pl-[3px]">
        <div className="flex h-[11px] w-3 items-center justify-center border border-[#7096c8] bg-[#dce9f8]">
          <Icon className="size-[6px]"><path d="M13 2v11H3" fill="none" stroke="#33507e" strokeWidth="4" /></Icon>
        </div>
        <div className="ml-1 flex h-[8px] flex-1 items-center bg-white text-[6px] leading-none text-[#54657c]">
          {rulerMarks.map((mark) => (
            <span key={mark} className={`flex flex-1 items-center justify-between ${mark === 18 || mark === 3 ? "bg-linear-to-r from-[#9dbde6] from-50% to-white to-50%" : ""}`}>
              <i>·</i><i>ı</i><span>{mark}</span><i>·</i>
            </span>
          ))}
        </div>
      </div>
      <WordDocument />
      <div className="flex h-[9px] shrink-0 items-center bg-[#6f97cc] text-[6px] text-[#1e355a]">
        <span className="w-[34px] pl-1">◀</span>
        <div className="flex h-2 w-[401px] items-center justify-center rounded-[2px] border border-[#8fabd2] bg-linear-to-b from-[#eef4fb] to-[#c2d3ea]">
          <Icon className="size-[6px]"><path d="M3 2v12M8 2v12M13 2v12" stroke="#7b93b8" strokeWidth="2" /></Icon>
        </div>
        <span className="mr-[10px] ml-auto">▶</span>
      </div>
      <footer className="flex flex-1 items-center bg-linear-to-b from-[#d8e7f8] to-[#a9c6ea] text-[7px] text-[#254578]">
        <span className="border-r border-[#a3c0e4] px-[5px]">Page: 19 of 29</span>
        <span className="border-r border-[#a3c0e4] px-[5px]">Words: 5,076</span>
        <Icon className="mx-1 size-[10px]"><path d="M1 9l7-4 6 5-6 4z" fill="#f4f8ff" stroke="#4371b6" /><path d="M7 1l6 7M13 1L7 8" stroke="#e0492c" strokeWidth="2" /></Icon>
        <span className="border-r border-[#a3c0e4] px-[5px]">Persian</span>
        <div className="ml-auto flex items-center gap-[3px] border-l border-[#86a9d6] pl-1">
          <span className="flex gap-px rounded-[2px] bg-[#d8e5f5]">
            {["Print layout", "Reading", "Web layout", "Outline", "Draft"].map((name, i) => (
              <button key={name} type="button" aria-label={name} className={i === 0 ? "bg-[#fbd08a]" : ""}>
                <Icon className="size-[9px]"><path d="M3 3h10v10H3z" fill="#f5f8fd" stroke="#6f83a6" strokeWidth="1.500" /><path d="M5 6h6M5 9h6" stroke="#6f83a6" /></Icon>
              </button>
            ))}
          </span>
          <label htmlFor="zoom" className="px-[2px]">130%</label>
          <button type="button" aria-label="Zoom out" className="flex size-2 items-center justify-center rounded-full border border-[#446597] bg-white">
            <Icon className="size-[6px]"><path d="M2 8h12" stroke="#446597" strokeWidth="3" /></Icon>
          </button>
          <input id="zoom" type="range" defaultValue={53} className="h-2 w-[58px] appearance-none bg-[linear-gradient(#6b90c2,#6b90c2)] bg-[length:100%_1px] bg-center bg-no-repeat [&::-webkit-slider-thumb]:h-2 [&::-webkit-slider-thumb]:w-[5px] [&::-webkit-slider-thumb]:appearance-none [&::-webkit-slider-thumb]:rounded-b-[3px] [&::-webkit-slider-thumb]:border [&::-webkit-slider-thumb]:border-[#54719e] [&::-webkit-slider-thumb]:bg-white" />
          <button type="button" aria-label="Zoom in" className="flex size-2 items-center justify-center rounded-full border border-[#446597] bg-white">
            <Icon className="size-[6px]"><path d="M2 8h12M8 2v12" stroke="#446597" strokeWidth="3" /></Icon>
          </button>
          <Icon className="mr-[2px] ml-[3px] size-[7px]"><path d="M15 2v13H2M11 7v4H7" fill="none" stroke="#6387b9" strokeWidth="2" strokeDasharray="2" /></Icon>
        </div>
      </footer>
    </section>
  );
}

const pointers: { name: string; mark: ReactNode; color: string }[] = [
  { name: "Select", mark: "", color: "" },
  { name: "Add to selection", mark: <Icon className="size-2"><path d="M8 2v12M2 8h12" stroke="#0a9a1c" strokeWidth="4" /></Icon>, color: "" },
  { name: "Remove from selection", mark: <Icon className="size-2"><path d="M1 8h14" stroke="#e01515" strokeWidth="4" /></Icon>, color: "" },
  { name: "Select all", mark: "Al", color: "text-[#0a8a1c]" },
  { name: "Clear selection", mark: "Cl", color: "text-[#e01515]" },
  { name: "Invert selection", mark: "In", color: "text-[#3a3fc0]" },
];

export default function App() {
  return (
    <div className="relative flex min-h-screen flex-col overflow-hidden bg-[#ece9d8] font-[DejaVu_Sans_Condensed,DejaVu_Sans,sans-serif]">
      <header className="flex h-[15px] shrink-0 items-center gap-1 border-b border-[#5a78c8] bg-linear-to-b from-[#7390dc] via-[#7b96e0] to-[#86aaf0] pr-[2px] pl-px text-white">
        <AppLogo />
        <h1 dir="rtl" className="ml-auto font-[Roboto,DejaVu_Sans_Condensed] text-[8px] font-bold">
          سازه نگار۸ - <bdi>sample.snpX</bdi>
        </h1>
        <WindowButtons />
      </header>
      <nav dir="rtl" className="flex h-[10px] shrink-0 items-center justify-start gap-[6px] px-[6px] text-[7px] leading-none whitespace-nowrap text-[#8d8a7d]">
        {menuItems.map((item) => (
          <button key={item} type="button">{item}</button>
        ))}
      </nav>
      <div className="flex h-[17px] shrink-0 justify-end border-b border-[#d6d2c0] bg-linear-to-b from-[#fdfdfb] to-[#ebe8d8] pr-px">
        <IconBar icons={topIcons} className="w-[439px]" />
      </div>
      <div className="flex h-4 shrink-0 justify-end border-b border-[#aba794] bg-linear-to-b from-[#fdfdfb] to-[#ebe8d8] pr-px">
        <IconBar icons={bottomIcons} className="w-[329px]" />
      </div>
      <main className="flex flex-1 justify-end">
        <aside className="flex w-[14px] flex-col gap-[2px] border-l border-white">
          {pointers.map((p) => (
            <button key={p.name} type="button" aria-label={p.name} className="flex h-[14px] w-[13px] items-end">
              <Icon className="mb-auto h-3 w-[7px]"><path d="M2 0v14l4-3 3 5 3-1-3-5h5z" fill="#fff" stroke="#111" strokeWidth="1.500" /></Icon>
              <b className={`-ml-px text-[6px] leading-[8px] ${p.color}`}>{p.mark}</b>
            </button>
          ))}
        </aside>
      </main>
      <div className="mx-[2px] h-[50px] shrink-0 border border-[#a9bfcd] bg-white" />
      <div className="flex h-4 shrink-0 items-end justify-end border-t border-[#c9c6b4] pr-[2px]">
        <div className="flex h-[7px] w-[165px] items-center rounded-b-[3px] border border-t-0 border-[#c4c0c4] bg-[#e6dfe3]">
          <span className="ml-[55px] h-full w-px bg-[#555]" />
          <span className="ml-[55px] h-full w-px bg-[#aaa]" />
          <Icon className="ml-1 size-[5px]"><path d="M1 14L8 2l7 12z" fill="#d0492c" /></Icon>
        </div>
      </div>
      <footer className="h-[10px] shrink-0 border-t border-[#bbb8a6] text-[7px] leading-[9px] text-[#111]">
        <span className="border-r border-[#c5c2b0] pr-1">X: 5671.4, Y: 22064.8, Z: 28200.0</span>
      </footer>
      <div className="h-[2px] shrink-0 bg-[#3f7ddb]" />

      <PlanWindow />
      <AutoDesignDialog />
      <ConnectionDialog />
      <SpliceDialog />
      <WordWindow />
    </div>
  );
}
